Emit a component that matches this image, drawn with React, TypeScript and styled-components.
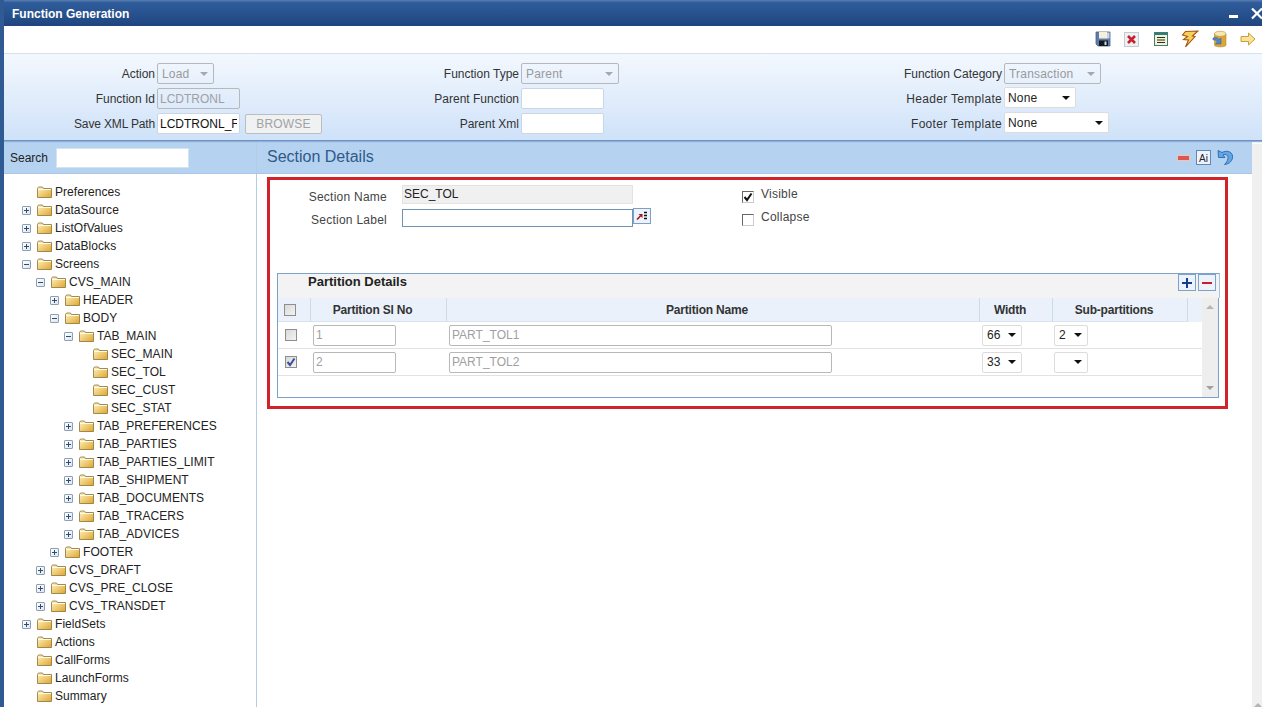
import React from "react";
import styled, { createGlobalStyle } from "styled-components";

const Global = createGlobalStyle`
  html, body { margin: 0; padding: 0; height: 100%; overflow: hidden; background: #fff; }
  body { font-family: "Liberation Sans", Arial, sans-serif; font-size: 12px; color: #333; }
  * { box-sizing: border-box; }
`;

const Page = styled.div`
  width: 1262px; height: 707px; display: flex; flex-direction: column; overflow: hidden;
  border-left: 4px solid #2f5a94; background: #fff;
`;
const TitleBar = styled.div`
  height: 26px; flex: none; display: flex; align-items: center; justify-content: space-between;
  margin-left: -4px; padding: 2px 0 0 12px; color: #fff; font-weight: bold; font-size: 12px;
  background: linear-gradient(#5b7fb0 0, #2f5c9b 10%, #26508c 60%, #1f4580 100%);
`;
const WinButtons = styled.div`display: flex; align-items: center; gap: 13px;`;
const Toolbar = styled.div`
  height: 28px; flex: none; display: flex; align-items: center; justify-content: flex-end;
  gap: 11px; padding: 0 5px 2px 0; background: #fff; border-bottom: 1px solid #d4e1ee;
`;
const ToolIcon = styled.svg`width: 18px; height: 18px; flex: none; display: block;`;
const HeaderForm = styled.div`
  height: 87px; flex: none; display: grid; grid-template-columns: 330px 466px 1fr;
  padding-top: 7px; background: linear-gradient(#f3f8fe, #cfe2f9);
  border-bottom: 1px solid #6f93c0; box-shadow: 0 1px 1px #8fb0d8;
  position: relative;
`;
const FormColumn = styled.div`display: flex; flex-direction: column;`;
const FormRow = styled.div<{ $label: number }>`
  height: 25px; display: grid; grid-template-columns: ${p => p.$label}px auto; column-gap: 2px;
  align-items: center; justify-content: start;
`;
const FormLabel = styled.label`text-align: right; color: #333; white-space: nowrap;`;
const TemplateLabel = styled(FormLabel)`letter-spacing: .3px;`;
const PathLabel = styled(FormLabel)`letter-spacing: -.15px;`;
const ControlGroup = styled.div`display: flex; align-items: center; gap: 5px;`;
const TextField = styled.input<{ $w: number }>`
  width: ${p => p.$w}px; height: 21px; border: 1px solid #c9d6e4; border-radius: 2px; background: #fff;
  padding: 0 2px; font: 12px "Liberation Sans", Arial, sans-serif; color: #111; outline: none;
  &:disabled { color: #a0a0a0; background: transparent; border-color: #b8b8b8; }
`;
const Browse = styled.button`
  width: 77px; height: 20px; border: 1px solid #bdbdbd; border-radius: 2px; background: #eff1f3; color: #a2a2a2;
  font: 12px "Liberation Sans", Arial, sans-serif; letter-spacing: .2px; padding: 0;
`;
const SelectBox = styled.div<{ $w: number; $off?: boolean }>`
  width: ${p => p.$w}px; height: 21px; display: flex; align-items: center;
  padding: 0 5px 0 4px; border: 1px solid ${p => (p.$off ? "#b8b8b8" : "#dcdcdc")}; border-radius: 2px;
  background: ${p => (p.$off ? "transparent" : "#fff")}; color: ${p => (p.$off ? "#9a9a9a" : "#222")};
  letter-spacing: .2px;
  &::after {
    content: ""; margin-left: auto; border-left: 4px solid transparent; border-right: 4px solid transparent;
    border-top: 4px solid ${p => (p.$off ? "#a8a8a8" : "#111")};
  }
`;
const LiftedSelect = styled(SelectBox)`margin-top: -2px; padding-left: 3px;`;
const Body = styled.div`flex: 1; display: grid; grid-template-columns: 253px 1fr 10px; min-height: 0;`;
const TreePane = styled.div`border-right: 1px solid #b5cbe2; display: flex; flex-direction: column; min-height: 0;`;
const SearchBar = styled.div`
  height: 33px; flex: none; display: flex; align-items: center; gap: 8px; padding: 1px 0 0 6px;
  background: #b6d2f1; border-bottom: 1px solid #a9c6e6; color: #222;
`;
const SearchInput = styled.input`
  width: 133px; height: 20px; border: 1px solid #d4e3f4; background: #fff; outline: none;
`;
const Tree = styled.div`padding-top: 9px;`;
const TreeRow = styled.div<{ $depth: number }>`
  height: 18px; display: flex; align-items: center; padding-left: ${p => 18 + p.$depth * 14}px; color: #222;
  white-space: nowrap; letter-spacing: .05px;
`;
const Expander = styled.span`
  width: 9px; height: 9px; flex: none; margin-right: 6px; border: 1px solid #8d9fb2; border-radius: 1px;
  background: linear-gradient(135deg, #fff, #dfe5ec); position: relative;
  &::before { content: ""; position: absolute; left: 1px; right: 1px; top: 3px; height: 1px; background: #2d4d76; }
`;
const ExpanderPlus = styled(Expander)`
  &::after { content: ""; position: absolute; top: 1px; bottom: 1px; left: 3px; width: 1px; background: #2d4d76; }
`;
const ExpanderGap = styled.span`width: 15px; flex: none;`;
const Folder = styled.svg`width: 15px; height: 12px; flex: none; margin-right: 3px; display: block;`;
const Main = styled.div`display: flex; flex-direction: column; min-height: 0;`;
const PanelHead = styled.div`
  height: 33px; flex: none; display: flex; align-items: center; justify-content: space-between;
  padding: 0 18px 1px 10px; background: #b6d2f1; border-bottom: 1px solid #a9c6e6;
  color: #2f5a88; font-size: 16px;
`;
const PanelIcons = styled.div`display: flex; align-items: center; gap: 6px; padding-top: 2px;`;
const RedBox = styled.div`
  margin: 3px 0 0 10px; width: 961px; height: 232px; flex: none; border: 3px solid #d2232a; padding: 4px 7px 0 7px;
  display: flex; flex-direction: column;
`;
const SectionForm = styled.div`height: 89px; flex: none; display: grid; grid-template-columns: 462px 1fr; padding-left: 3px;`;
const SectionFields = styled.div`display: flex; flex-direction: column; gap: 4px;`;
const SectionRow = styled.div`display: grid; grid-template-columns: 107px 231px 18px; column-gap: 15px; align-items: center;`;
const SectionRowTight = styled(SectionRow)`column-gap: 0; grid-template-columns: 122px 231px 18px;`;
const SectionLabel = styled.label`text-align: right; color: #444; padding-top: 6px; letter-spacing: .25px;`;
const SectionLabelPad = styled(SectionLabel)`padding-right: 15px; padding-top: 5px;`;
const NameField = styled.div`
  height: 19px; background: #f0f0f0; border: 1px solid #e3e3e3; padding-left: 1px; color: #222; line-height: 17px;
`;
const LabelField = styled.input`height: 18px; border: 1px solid #6f93b6; background: #fff; outline: none;`;
const PickButton = styled.div`
  width: 18px; height: 16px; margin-top: -3px; border: 1px solid #7ea0c4; background: #eef3fb;
  display: flex; align-items: center; justify-content: center;
`;
const Options = styled.div`display: flex; flex-direction: column; gap: 7px; padding-top: 3px;`;
const Option = styled.div`display: flex; align-items: flex-start; gap: 7px; color: #444; height: 16px; line-height: 15px; letter-spacing: .25px;`;
const PlainCheck = styled.span`
  width: 12px; height: 12px; margin-top: 4px; border: 1px solid #666; border-right-color: #ccc; border-bottom-color: #ccc; background: #fff;
  display: flex; align-items: center; justify-content: center; flex: none;
`;
const Partition = styled.div`
  width: 943px; height: 125px; flex: none; display: flex; flex-direction: column;
`;
const PartitionHead = styled.div`
  height: 25px; flex: none; display: flex; align-items: flex-start; justify-content: space-between; width: 943px;
  padding: 0 3px 0 30px; background: #f3f3f3; border-top: 1px solid #7ba3c9; border-left: 1px solid #7ba3c9; border-right: 1px solid #a9c3dc;
  font-weight: bold; color: #222; font-size: 13px; line-height: 16px;
`;
const PartitionActions = styled.div`display: flex; gap: 2px;`;
const SquareButton = styled.button<{ $c: string }>`
  width: 18px; height: 17px; padding: 0; border: 1px solid #7ba3c9; background: #eef3fb; color: ${p => p.$c};
  display: flex; align-items: center; justify-content: center;
`;
const TableWrap = styled.div`
  width: 942px; height: 100px; flex: none; display: flex; border: 1px solid #7ba3c9; border-top: none; background: #fff;
`;
const Table = styled.div`flex: 1; display: flex; flex-direction: column;`;
const COLS = "33px 136px 533px 73px 135px";
const HeadRow = styled.div`
  height: 24px; flex: none; display: grid; grid-template-columns: ${COLS}; background: #eaf1fb;
`;
const HeadCell = styled.div`
  display: flex; align-items: center; justify-content: center; font-weight: bold; color: #333;
  border-right: 1px solid #cbdbea; border-bottom: 1px solid #d9e3ef; padding-right: 12px; letter-spacing: -.2px;
`;
const HeadCheckCell = styled(HeadCell)`padding-right: 9px;`;
const DataRow = styled.div`
  height: 27px; flex: none; display: grid; grid-template-columns: ${COLS}; align-items: center;
  border-bottom: 1px solid #e2e2e2;
`;
const Cell = styled.div`padding-left: 2px; display: flex; align-items: center;`;
const SubCell = styled(Cell)`padding-left: 1px;`;
const CheckCell = styled(Cell)`padding-left: 7px;`;
const GreyCheck = styled.span`
  width: 12px; height: 12px; border: 1px solid #8e8e8e; background: linear-gradient(135deg, #d9d9d9, #f3f3f3);
  display: flex; align-items: center; justify-content: center;
`;
const VScroll = styled.div`
  width: 16px; flex: none; background: #eeeeee; display: flex; flex-direction: column; justify-content: space-between; align-items: center; padding: 7px 0;
`;
const ArrowUp = styled.span`border-left: 4px solid transparent; border-right: 4px solid transparent; border-bottom: 4px solid #b5b5b5;`;
const ArrowDown = styled.span`border-left: 4px solid transparent; border-right: 4px solid transparent; border-top: 4px solid #a0a0a0;`;
const PageScroll = styled.div`
  margin-top: 3px; background: #f0f0f0; display: flex; justify-content: center; padding-top: 6px; padding-left: 1px;
`;

const FolderIcon = () => (
  <Folder viewBox="0 0 15 12">
    <defs>
      <linearGradient id="fg" x1="0" y1="0" x2="1" y2="1">
        <stop offset="0" stopColor="#fff4c4" />
        <stop offset="1" stopColor="#dfa52c" />
      </linearGradient>
    </defs>
    <path d="M.5 2.5 L1.5 1 H5.5 L6.5 2.5 H14.5 V11.5 H.5 Z" fill="url(#fg)" stroke="#8a7235" strokeWidth=".8" />
    <path d="M1 3.5 H14" stroke="#fffbe6" />
  </Folder>
);

type Node = [number, string, "+" | "-" | ""];
const nodes: Node[] = [
  [0, "Preferences", ""], [0, "DataSource", "+"], [0, "ListOfValues", "+"], [0, "DataBlocks", "+"],
  [0, "Screens", "-"], [1, "CVS_MAIN", "-"], [2, "HEADER", "+"], [2, "BODY", "-"], [3, "TAB_MAIN", "-"],
  [4, "SEC_MAIN", ""], [4, "SEC_TOL", ""], [4, "SEC_CUST", ""], [4, "SEC_STAT", ""],
  [3, "TAB_PREFERENCES", "+"], [3, "TAB_PARTIES", "+"], [3, "TAB_PARTIES_LIMIT", "+"], [3, "TAB_SHIPMENT", "+"],
  [3, "TAB_DOCUMENTS", "+"], [3, "TAB_TRACERS", "+"], [3, "TAB_ADVICES", "+"], [2, "FOOTER", "+"],
  [1, "CVS_DRAFT", "+"], [1, "CVS_PRE_CLOSE", "+"], [1, "CVS_TRANSDET", "+"], [0, "FieldSets", "+"],
  [0, "Actions", ""], [0, "CallForms", ""], [0, "LaunchForms", ""], [0, "Summary", ""],
];

const Tick = ({ c }: { c: string }) => (
  <svg width="10" height="10" viewBox="0 0 10 10"><path d="M1.5 5 L4 8 L8.5 1.5" fill="none" stroke={c} strokeWidth="2" /></svg>
);

export default function App() {
  return (
    <Page>
      <Global />
      <TitleBar>
        Function Generation
        <WinButtons>
          <svg width="9" height="12" viewBox="0 0 9 12"><rect x="0" y="7" width="9" height="3" fill="#fff" /></svg>
          <svg width="11" height="12" viewBox="0 0 11 12"><path d="M1 .5 L11 10.5 M11 .5 L1 10.5" stroke="#fff" strokeWidth="2.2" /></svg>
        </WinButtons>
      </TitleBar>
      <Toolbar>
        <ToolIcon viewBox="0 0 18 18">
          <path d="M2 2 H16 V16 H4 L2 14 Z" fill="#5f7ca6" stroke="#47648f" strokeWidth=".8" />
          <rect x="5" y="2" width="8" height="6.5" fill="#f4f0dc" />
          <rect x="13" y="2.5" width="2.5" height="6" fill="#c9d4e4" />
          <rect x="5" y="10.5" width="9" height="5.5" fill="#14181f" />
          <rect x="10.5" y="11.5" width="2" height="3.5" fill="#d5dde8" />
        </ToolIcon>
        <ToolIcon viewBox="0 0 18 18">
          <rect x="1.5" y="2.5" width="14" height="14" fill="#eef0f2" stroke="#c3ccd5" />
          <path d="M5 6 L12 13 M12 6 L5 13" stroke="#c9202c" strokeWidth="2.6" />
        </ToolIcon>
        <ToolIcon viewBox="0 0 18 18">
          <rect x="2.5" y="2.5" width="13" height="13" fill="#f5f3cf" stroke="#3f7d76" />
          <rect x="3" y="3" width="12" height="2" fill="#2f7f78" />
          <path d="M5 7.5 H13 M5 10 H13 M5 12.5 H13" stroke="#2b2b2b" strokeWidth="1.2" />
        </ToolIcon>
        <ToolIcon viewBox="0 0 18 18">
          <path d="M4.5 1.5 L17 1 L11.5 6 L14 6.5 L4.5 17 L7.5 10 L2.5 9.5 L6.5 6.5 L1.5 5 Z" fill="#f7cf5c" stroke="#a1560e" strokeWidth="1.1" />
        </ToolIcon>
        <ToolIcon viewBox="0 0 18 18">
          <path d="M4.5 4 V15 C4.5 17.5 16 17.5 16 15 V4 Z" fill="#dba637" stroke="#b58c2e" strokeWidth=".6" />
          <ellipse cx="10.2" cy="3.8" rx="5.8" ry="2.6" fill="#f6e7b4" stroke="#b58c2e" strokeWidth=".6" />
          <path d="M3 8 C6 6.5 8 8 9 9.5 L11 8 V14 H5.5 L7.5 12 C6.5 10.5 5 9.5 3 10 Z" fill="#4d86d3" stroke="#2d5796" strokeWidth=".5" />
        </ToolIcon>
        <ToolIcon viewBox="0 0 18 18">
          <path d="M2 6.5 H9.5 V3 L16 9 L9.5 15 V11.5 H2 Z" fill="#f9e39b" stroke="#c7a037" />
        </ToolIcon>
      </Toolbar>
      <HeaderForm>
        <FormColumn>
          <FormRow $label={151}><FormLabel>Action</FormLabel><SelectBox $w={57} $off>Load</SelectBox></FormRow>
          <FormRow $label={151}><FormLabel>Function Id</FormLabel><TextField $w={83} disabled value="LCDTRONL" readOnly /></FormRow>
          <FormRow $label={151}>
            <PathLabel>Save XML Path</PathLabel>
            <ControlGroup>
              <TextField $w={83} value="LCDTRONL_FGEN" readOnly />
              <Browse disabled>BROWSE</Browse>
            </ControlGroup>
          </FormRow>
        </FormColumn>
        <FormColumn>
          <FormRow $label={185}><FormLabel>Function Type</FormLabel><SelectBox $w={98} $off>Parent</SelectBox></FormRow>
          <FormRow $label={185}><FormLabel>Parent Function</FormLabel><TextField $w={83} value="" readOnly /></FormRow>
          <FormRow $label={185}><FormLabel>Parent Xml</FormLabel><TextField $w={83} value="" readOnly /></FormRow>
        </FormColumn>
        <FormColumn>
          <FormRow $label={202}><FormLabel>Function Category</FormLabel><SelectBox $w={97} $off>Transaction</SelectBox></FormRow>
          <FormRow $label={202}><TemplateLabel>Header Template</TemplateLabel><LiftedSelect $w={72}>None</LiftedSelect></FormRow>
          <FormRow $label={202}><TemplateLabel>Footer Template</TemplateLabel><LiftedSelect $w={105}>None</LiftedSelect></FormRow>
        </FormColumn>
      </HeaderForm>
      <Body>
        <TreePane>
          <SearchBar>Search<SearchInput /></SearchBar>
          <Tree>
            {nodes.map(([d, name, st]) => (
              <TreeRow key={name} $depth={d}>
                {st === "+" ? <ExpanderPlus /> : st === "-" ? <Expander /> : <ExpanderGap />}
                <FolderIcon />
                {name}
              </TreeRow>
            ))}
          </Tree>
        </TreePane>
        <Main>
          <PanelHead>
            Section Details
            <PanelIcons>
              <svg width="13" height="8" viewBox="0 0 13 8"><rect x=".5" y="1.5" width="12" height="5" fill="#dd5650" stroke="#efc3bc" /></svg>
              <svg width="15" height="15" viewBox="0 0 15 15"><rect x=".5" y=".5" width="14" height="14" fill="#eef3fb" stroke="#5f86b5" /><text x="3" y="11.5" fontSize="10" fontFamily="Liberation Sans" fill="#222">Ai</text></svg>
              <svg width="17" height="17" viewBox="0 0 17 17"><path d="M1 1.5 L1.5 8.5 L8 8.5 L6 6 C9 4.5 11.5 6.5 11 9.5 C10.6 12 9 14 7.5 15.5 C12.5 15 16 11.5 15.5 7 C15 2.5 9.5 1 5 3.5 Z" fill="#62a6e4" stroke="#2368b0" strokeWidth=".9" /></svg>
            </PanelIcons>
          </PanelHead>
          <RedBox>
            <SectionForm>
              <SectionFields>
                <SectionRow>
                  <SectionLabel>Section Name</SectionLabel>
                  <NameField>SEC_TOL</NameField>
                </SectionRow>
                <SectionRowTight>
                  <SectionLabelPad>Section Label</SectionLabelPad>
                  <LabelField />
                  <PickButton>
                    <svg width="12" height="10" viewBox="0 0 12 10"><path d="M1 8.5 L4.5 5" stroke="#a3121f" strokeWidth="1.6" fill="none" /><path d="M2.5 3 H6.5 V7 Z" fill="#a3121f" /><path d="M8 1.5 H11 M8 4.5 H11 M8 7.5 H11" stroke="#111" strokeWidth="1.6" /></svg>
                  </PickButton>
                </SectionRowTight>
              </SectionFields>
              <Options>
                <Option><PlainCheck><Tick c="#111" /></PlainCheck>Visible</Option>
                <Option><PlainCheck />Collapse</Option>
              </Options>
            </SectionForm>
            <Partition>
              <PartitionHead>
                Partition Details
                <PartitionActions>
                  <SquareButton $c="#123f8f"><svg width="12" height="12" viewBox="0 0 12 12"><path d="M1 6 H11 M6 1 V11" stroke="currentColor" strokeWidth="2" /></svg></SquareButton>
                  <SquareButton $c="#c8202a"><svg width="12" height="12" viewBox="0 0 12 12"><path d="M1 6 H11" stroke="currentColor" strokeWidth="2" /></svg></SquareButton>
                </PartitionActions>
              </PartitionHead>
              <TableWrap>
                <Table>
                  <HeadRow>
                    <HeadCheckCell><GreyCheck /></HeadCheckCell>
                    <HeadCell>Partition Sl No</HeadCell>
                    <HeadCell>Partition Name</HeadCell>
                    <HeadCell>Width</HeadCell>
                    <HeadCell>Sub-partitions</HeadCell>
                  </HeadRow>
                  <DataRow>
                    <CheckCell><GreyCheck /></CheckCell>
                    <Cell><TextField $w={83} disabled value="1" readOnly /></Cell>
                    <Cell><TextField $w={383} disabled value="PART_TOL1" readOnly /></Cell>
                    <Cell><SelectBox $w={40}>66</SelectBox></Cell>
                    <SubCell><SelectBox $w={34}>2</SelectBox></SubCell>
                  </DataRow>
                  <DataRow>
                    <CheckCell><GreyCheck><Tick c="#3c4f9a" /></GreyCheck></CheckCell>
                    <Cell><TextField $w={83} disabled value="2" readOnly /></Cell>
                    <Cell><TextField $w={383} disabled value="PART_TOL2" readOnly /></Cell>
                    <Cell><SelectBox $w={40}>33</SelectBox></Cell>
                    <SubCell><SelectBox $w={34} /></SubCell>
                  </DataRow>
                </Table>
                <VScroll><ArrowUp /><ArrowDown /></VScroll>
              </TableWrap>
            </Partition>
          </RedBox>
        </Main>
        <PageScroll><ArrowUp /></PageScroll>
      </Body>
    </Page>
  );
}
